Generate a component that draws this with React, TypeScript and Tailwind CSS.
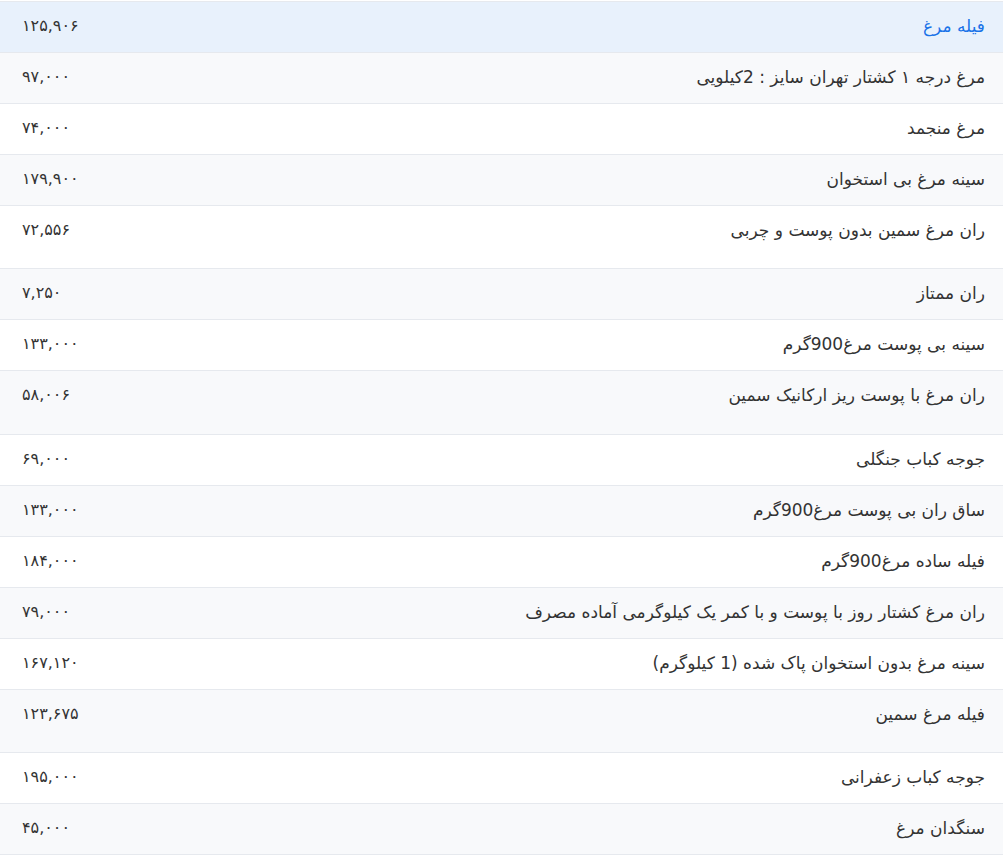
import React from "react";

type Row = { name: string; price: string; h: string };

const rows: Row[] = [
  { name: "فیله مرغ", price: "۱۲۵,۹۰۶", h: "h-[51px]" },
  { name: "مرغ درجه ۱ کشتار تهران سایز : 2کیلویی", price: "۹۷,۰۰۰", h: "h-[51px]" },
  { name: "مرغ منجمد", price: "۷۴,۰۰۰", h: "h-[51px]" },
  { name: "سینه مرغ بی استخوان", price: "۱۷۹,۹۰۰", h: "h-[51px]" },
  { name: "ران مرغ سمین بدون پوست و چربی", price: "۷۲,۵۵۶", h: "h-[63px]" },
  { name: "ران ممتاز", price: "۷,۲۵۰", h: "h-[51px]" },
  { name: "سینه بی پوست مرغ900گرم", price: "۱۳۳,۰۰۰", h: "h-[51px]" },
  { name: "ران مرغ با پوست ریز ارکانیک سمین", price: "۵۸,۰۰۶", h: "h-[64px]" },
  { name: "جوجه کباب جنگلی", price: "۶۹,۰۰۰", h: "h-[51px]" },
  { name: "ساق ران بی پوست مرغ900گرم", price: "۱۳۳,۰۰۰", h: "h-[51px]" },
  { name: "فیله ساده مرغ900گرم", price: "۱۸۴,۰۰۰", h: "h-[51px]" },
  { name: "ران مرغ کشتار روز با پوست و با کمر یک کیلوگرمی آماده مصرف", price: "۷۹,۰۰۰", h: "h-[51px]" },
  { name: "سینه مرغ بدون استخوان پاک شده (1 کیلوگرم)", price: "۱۶۷,۱۲۰", h: "h-[51px]" },
  { name: "فیله مرغ سمین", price: "۱۲۳,۶۷۵", h: "h-[63px]" },
  { name: "جوجه کباب زعفرانی", price: "۱۹۵,۰۰۰", h: "h-[51px]" },
  { name: "سنگدان مرغ", price: "۴۵,۰۰۰", h: "h-[51px]" },
];

export default function App() {
  return (
    <div
      className="w-[1003px] bg-white pt-px"
      style={{ fontFamily: '"DejaVu Sans", "Noto Sans", sans-serif' }}
    >
      <div dir="rtl" className="border-t border-[#e6e9ee]">
        {rows.map((r, i) => {
          const bg =
            i === 0 ? "bg-[#e8f1fc]" : i % 2 === 1 ? "bg-[#f8f9fb]" : "bg-white";
          return (
            <div
              key={i}
              className={`flex items-start justify-between border-b border-[#e6e9ee] pt-[12px] pr-[18px] pl-[22px] ${bg} ${r.h}`}
            >
              <span
                className={`text-[17px] leading-6 ${
                  i === 0 ? "text-[#1a73e8]" : "text-[#333333]"
                }`}
              >
                {r.name}
              </span>
              <span className="text-[16px] leading-6 text-[#333333]" dir="ltr">
                {r.price}
              </span>
            </div>
          );
        })}
      </div>
    </div>
  );
}
